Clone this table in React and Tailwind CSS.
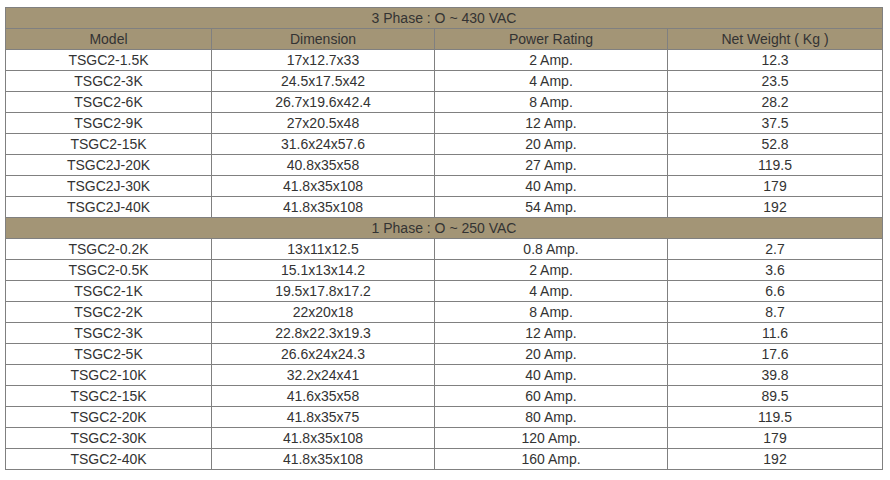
const threePhase = [
  ['TSGC2-1.5K', '17x12.7x33', '2 Amp.', '12.3'],
  ['TSGC2-3K', '24.5x17.5x42', '4 Amp.', '23.5'],
  ['TSGC2-6K', '26.7x19.6x42.4', '8 Amp.', '28.2'],
  ['TSGC2-9K', '27x20.5x48', '12 Amp.', '37.5'],
  ['TSGC2-15K', '31.6x24x57.6', '20 Amp.', '52.8'],
  ['TSGC2J-20K', '40.8x35x58', '27 Amp.', '119.5'],
  ['TSGC2J-30K', '41.8x35x108', '40 Amp.', '179'],
  ['TSGC2J-40K', '41.8x35x108', '54 Amp.', '192'],
]

const onePhase = [
  ['TSGC2-0.2K', '13x11x12.5', '0.8 Amp.', '2.7'],
  ['TSGC2-0.5K', '15.1x13x14.2', '2 Amp.', '3.6'],
  ['TSGC2-1K', '19.5x17.8x17.2', '4 Amp.', '6.6'],
  ['TSGC2-2K', '22x20x18', '8 Amp.', '8.7'],
  ['TSGC2-3K', '22.8x22.3x19.3', '12 Amp.', '11.6'],
  ['TSGC2-5K', '26.6x24x24.3', '20 Amp.', '17.6'],
  ['TSGC2-10K', '32.2x24x41', '40 Amp.', '39.8'],
  ['TSGC2-15K', '41.6x35x58', '60 Amp.', '89.5'],
  ['TSGC2-20K', '41.8x35x75', '80 Amp.', '119.5'],
  ['TSGC2-30K', '41.8x35x108', '120 Amp.', '179'],
  ['TSGC2-40K', '41.8x35x108', '160 Amp.', '192'],
]

const cell = 'h-5 border border-[#808080] p-0 text-center leading-5'

function Rows({ rows }) {
  return rows.map((r, i) => (
    <tr key={i} className="bg-white">
      {r.map((v, j) => (
        <td key={j} className={cell}>{v}</td>
      ))}
    </tr>
  ))
}

export default function App() {
  return (
    <div className="min-h-[480px] bg-white pl-[5px] pt-[7px] font-['Liberation_Sans',Arial,sans-serif] text-[14px] text-[#333]">
      <table className="w-[877px] table-fixed border-collapse">
        <colgroup>
          <col className="w-[206px]" />
          <col className="w-[223px]" />
          <col className="w-[233px]" />
          <col className="w-[215px]" />
        </colgroup>
        <tbody>
          <tr className="bg-[#a39576]">
            <td colSpan={4} className={cell}>3 Phase : O ~ 430 VAC</td>
          </tr>
          <tr className="bg-[#a39576]">
            <td className={cell}>Model</td>
            <td className={cell}>Dimension</td>
            <td className={cell}>Power Rating</td>
            <td className={cell}>Net Weight ( Kg )</td>
          </tr>
          <Rows rows={threePhase} />
          <tr className="bg-[#a39576]">
            <td colSpan={4} className={cell}>1 Phase : O ~ 250 VAC</td>
          </tr>
          <Rows rows={onePhase} />
        </tbody>
      </table>
    </div>
  )
}
